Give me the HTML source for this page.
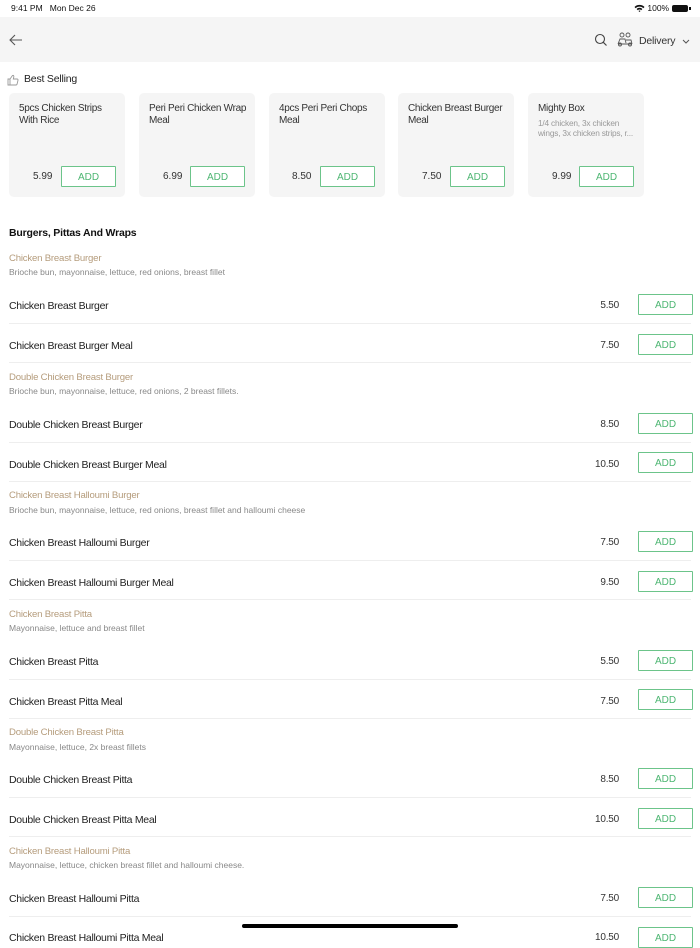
<!DOCTYPE html>
<html><head><meta charset="utf-8"><style>
*{margin:0;padding:0;box-sizing:border-box}
body{width:700px;height:934px;overflow:hidden;background:#fff;font-family:"Liberation Sans",sans-serif;position:relative;color:#222}
.a{position:absolute}
.btn{position:absolute;width:55px;height:21px;border:1.5px solid #6cc48a;color:#4db672;font-size:10px;display:flex;align-items:center;justify-content:center;background:#fff;border-radius:1px;padding-top:1px}
.card{position:absolute;top:93px;width:116px;height:104px;background:#f5f5f5;border-radius:5px}
.card .t{position:absolute;left:10px;top:10px;width:99px;font-size:10px;letter-spacing:-0.3px;line-height:12px;color:#333}
.card .d{position:absolute;left:10px;top:25px;width:104px;font-size:8.3px;letter-spacing:-0.2px;line-height:10px;color:#999}
.h{position:absolute;left:9px;font-size:9.6px;letter-spacing:-0.2px;color:#b59c7c;transform:translateY(2px)}
.ds{position:absolute;left:9px;font-size:8.5px;color:#888;transform:translateY(1px)}
.it{position:absolute;left:9px;font-size:10.5px;letter-spacing:-0.3px;color:#222;transform:translateY(2px)}
.pr{position:absolute;right:81px;font-size:10px;letter-spacing:-0.2px;color:#333;transform:translateY(1px)}
.sep{position:absolute;left:9px;right:9px;height:1px;background:#eee}
.cp{position:absolute;top:171px;font-size:10px;color:#333}
</style></head><body>
<div class="a" style="left:11px;top:3px;font-size:8.5px;color:#111">9:41 PM&nbsp;&nbsp;&nbsp;Mon Dec 26</div>
<div class="a" style="left:634px;top:3px;font-size:8.5px;color:#111">
<svg width="11" height="8" viewBox="0 0 11 8" style="vertical-align:-1px"><path d="M0.5 3 A7 7 0 0 1 10.5 3 L9.3 4.2 A5.3 5.3 0 0 0 1.7 4.2Z M2.6 5 A4 4 0 0 1 8.4 5 L7.2 6.2 A2.4 2.4 0 0 0 3.8 6.2Z M4.5 7 L5.5 8 L6.5 7 A1.4 1.4 0 0 0 4.5 7Z" fill="#111"/></svg> 100%</div>
<div class="a" style="left:672px;top:5px;width:16px;height:7px;background:#111;border-radius:2px"></div>
<div class="a" style="left:689px;top:7px;width:1.5px;height:3px;background:#111"></div>
<div class="a" style="left:0;top:17px;width:700px;height:45px;background:#f5f5f5"></div>
<svg class="a" style="left:8px;top:33px" width="16" height="14" viewBox="0 0 16 14"><path d="M14 7H2M7 2L2 7L7 12" fill="none" stroke="#555" stroke-width="1.1"/></svg>
<svg class="a" style="left:594px;top:33px" width="14" height="14" viewBox="0 0 14 14"><circle cx="6" cy="6" r="4.5" fill="none" stroke="#444" stroke-width="1.1"/><path d="M9.3 9.3L12.5 12.5" stroke="#444" stroke-width="1.2"/></svg>
<svg class="a" style="left:616px;top:32px" width="17" height="15" viewBox="0 0 17 15"><circle cx="6" cy="3" r="2" fill="none" stroke="#555" stroke-width="0.9"/><circle cx="12" cy="3" r="2" fill="none" stroke="#555" stroke-width="0.9"/><path d="M2 12L4 7H9L10 11M10 8H15L16 12M2 12H16" fill="none" stroke="#555" stroke-width="0.9"/><circle cx="4" cy="12.5" r="1.5" fill="none" stroke="#555" stroke-width="0.9"/><circle cx="14" cy="12.5" r="1.5" fill="none" stroke="#555" stroke-width="0.9"/></svg>
<div class="a" style="left:639px;top:35px;font-size:10.5px;letter-spacing:-0.2px;color:#333">Delivery</div>
<svg class="a" style="left:682px;top:39px" width="8" height="5" viewBox="0 0 8 5"><path d="M1 1L4 4L7 1" fill="none" stroke="#555"/></svg>
<svg class="a" style="left:7px;top:74px" width="12" height="12" viewBox="0 0 12 12"><path d="M1 5H3V11H1Z M3 5L5.5 1.5C6.5 1 7 2 6.8 3L6.3 5H10C10.8 5 11.2 5.7 11 6.3L10 10.3C9.8 10.8 9.4 11 9 11H3" fill="none" stroke="#999" stroke-width="0.9"/></svg>
<div class="a" style="left:24px;top:73px;font-size:10.5px;letter-spacing:-0.2px;color:#222">Best Selling</div>

<div class="card" style="left:9px"><div class="t">5pcs Chicken Strips With Rice</div></div>
<div class="card" style="left:139px"><div class="t">Peri Peri Chicken Wrap Meal</div></div>
<div class="card" style="left:269px"><div class="t">4pcs Peri Peri Chops Meal</div></div>
<div class="card" style="left:398px"><div class="t">Chicken Breast Burger Meal</div></div>
<div class="card" style="left:528px"><div class="t">Mighty Box</div><div class="d">1/4 chicken, 3x chicken wings, 3x chicken strips, r...</div></div>
<div class="cp" style="left:33px">5.99</div><div class="btn" style="left:61px;top:166px">ADD</div>
<div class="cp" style="left:163px">6.99</div><div class="btn" style="left:190px;top:166px">ADD</div>
<div class="cp" style="left:292px">8.50</div><div class="btn" style="left:320px;top:166px">ADD</div>
<div class="cp" style="left:422px">7.50</div><div class="btn" style="left:450px;top:166px">ADD</div>
<div class="cp" style="left:552px">9.99</div><div class="btn" style="left:579px;top:166px">ADD</div>

<div class="a" style="left:9px;top:227px;font-size:10.5px;letter-spacing:-0.2px;font-weight:bold;color:#111">Burgers, Pittas And Wraps</div>

<div class="h" style="top:251px">Chicken Breast Burger</div>
<div class="ds" style="top:266px">Brioche bun, mayonnaise, lettuce, red onions, breast fillet</div>
<div class="it" style="top:298px">Chicken Breast Burger</div><div class="pr" style="top:299px">5.50</div><div class="btn" style="left:638px;top:294px">ADD</div>
<div class="sep" style="top:323px"></div>
<div class="it" style="top:338px">Chicken Breast Burger Meal</div><div class="pr" style="top:339px">7.50</div><div class="btn" style="left:638px;top:334px">ADD</div>
<div class="sep" style="top:362px"></div>

<div class="h" style="top:370px">Double Chicken Breast Burger</div>
<div class="ds" style="top:385px">Brioche bun, mayonnaise, lettuce, red onions, 2 breast fillets.</div>
<div class="it" style="top:417px">Double Chicken Breast Burger</div><div class="pr" style="top:418px">8.50</div><div class="btn" style="left:638px;top:413px">ADD</div>
<div class="sep" style="top:442px"></div>
<div class="it" style="top:457px">Double Chicken Breast Burger Meal</div><div class="pr" style="top:458px">10.50</div><div class="btn" style="left:638px;top:452px">ADD</div>
<div class="sep" style="top:481px"></div>

<div class="h" style="top:488px">Chicken Breast Halloumi Burger</div>
<div class="ds" style="top:504px">Brioche bun, mayonnaise, lettuce, red onions, breast fillet and halloumi cheese</div>
<div class="it" style="top:535px">Chicken Breast Halloumi Burger</div><div class="pr" style="top:536px">7.50</div><div class="btn" style="left:638px;top:531px">ADD</div>
<div class="sep" style="top:560px"></div>
<div class="it" style="top:575px">Chicken Breast Halloumi Burger Meal</div><div class="pr" style="top:576px">9.50</div><div class="btn" style="left:638px;top:571px">ADD</div>
<div class="sep" style="top:599px"></div>

<div class="h" style="top:607px">Chicken Breast Pitta</div>
<div class="ds" style="top:622px">Mayonnaise, lettuce and breast fillet</div>
<div class="it" style="top:654px">Chicken Breast Pitta</div><div class="pr" style="top:655px">5.50</div><div class="btn" style="left:638px;top:650px">ADD</div>
<div class="sep" style="top:679px"></div>
<div class="it" style="top:694px">Chicken Breast Pitta Meal</div><div class="pr" style="top:695px">7.50</div><div class="btn" style="left:638px;top:689px">ADD</div>
<div class="sep" style="top:718px"></div>

<div class="h" style="top:725px">Double Chicken Breast Pitta</div>
<div class="ds" style="top:741px">Mayonnaise, lettuce, 2x breast fillets</div>
<div class="it" style="top:772px">Double Chicken Breast Pitta</div><div class="pr" style="top:773px">8.50</div><div class="btn" style="left:638px;top:768px">ADD</div>
<div class="sep" style="top:797px"></div>
<div class="it" style="top:812px">Double Chicken Breast Pitta Meal</div><div class="pr" style="top:813px">10.50</div><div class="btn" style="left:638px;top:808px">ADD</div>
<div class="sep" style="top:836px"></div>

<div class="h" style="top:844px">Chicken Breast Halloumi Pitta</div>
<div class="ds" style="top:859px">Mayonnaise, lettuce, chicken breast fillet and halloumi cheese.</div>
<div class="it" style="top:891px">Chicken Breast Halloumi Pitta</div><div class="pr" style="top:892px">7.50</div><div class="btn" style="left:638px;top:887px">ADD</div>
<div class="sep" style="top:916px"></div>
<div class="it" style="top:930px">Chicken Breast Halloumi Pitta Meal</div><div class="pr" style="top:931px">10.50</div><div class="btn" style="left:638px;top:927px">ADD</div>

<div class="a" style="left:242px;top:924px;width:216px;height:4px;background:#000;border-radius:2px"></div>
</body></html>
